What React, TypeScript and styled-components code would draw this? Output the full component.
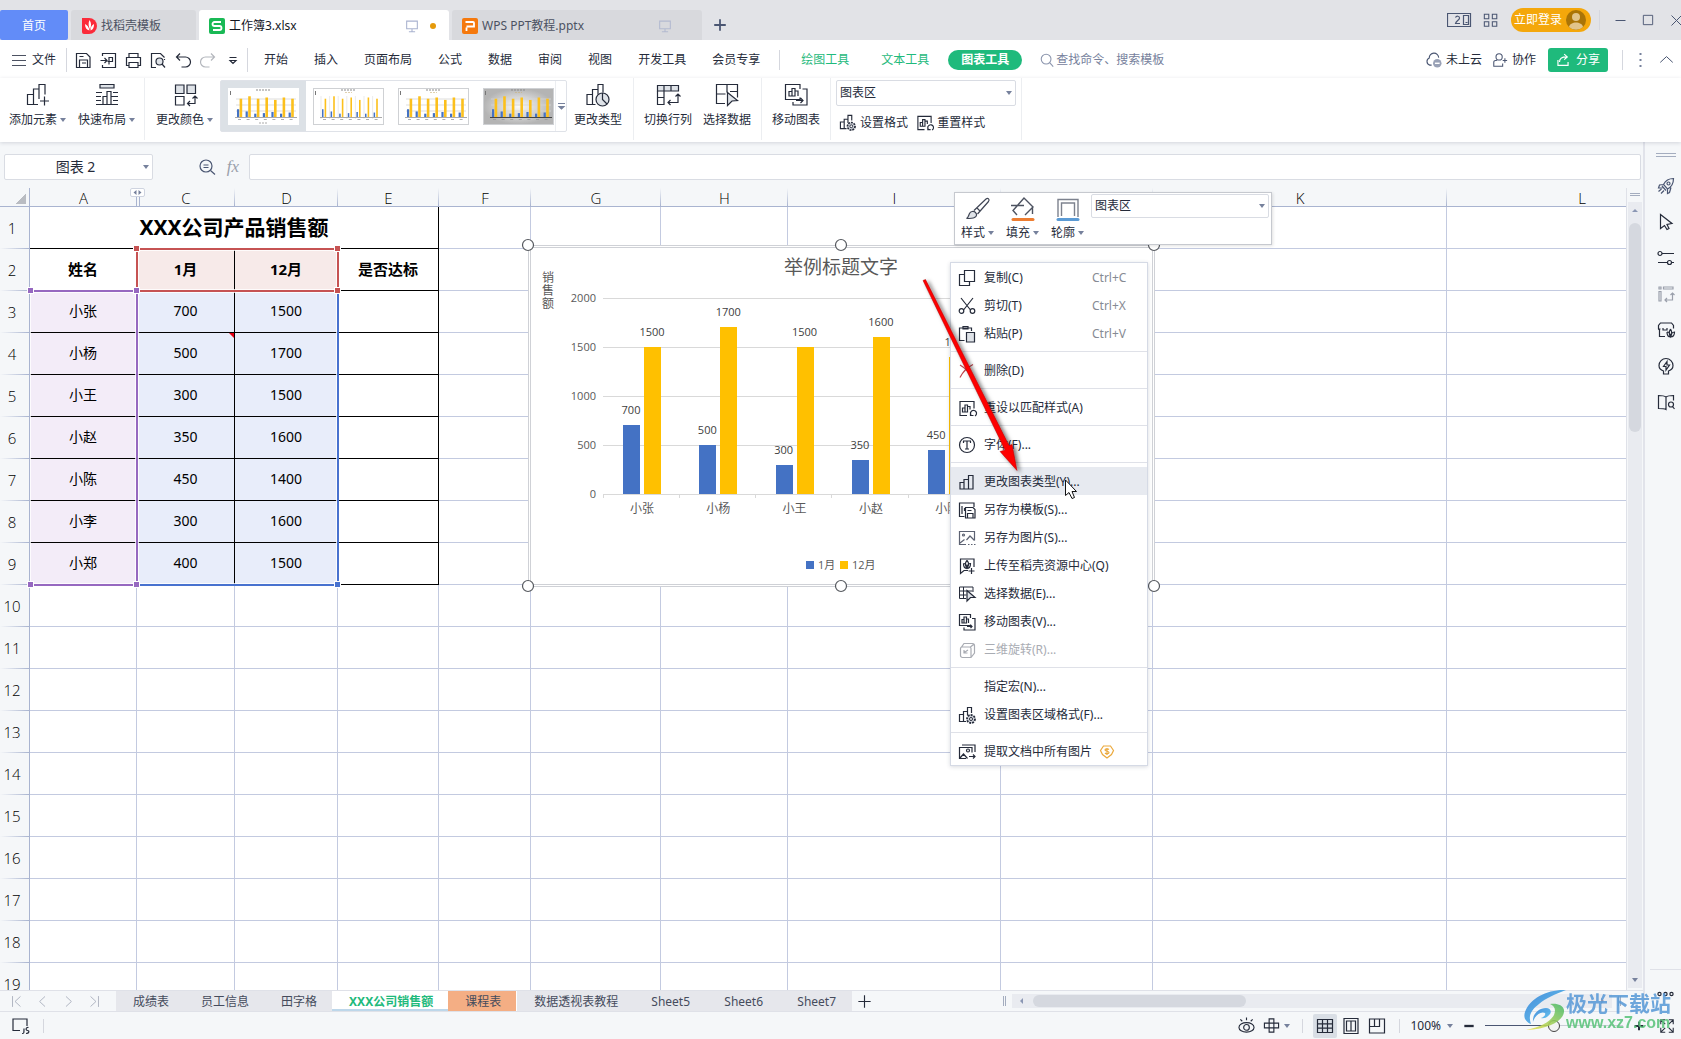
import React from "react";
import styled, { createGlobalStyle, css } from "styled-components";

const ink = "#252b3a";
const slate = "#4a5672";
const green = "#1fba7c";
const panel = "#f5f7f9";
const line = "#dfe1e8";
const gridLine = "#c3cae0";
const headLine = "#a9b4d0";

const GlobalStyle = createGlobalStyle`
  * { box-sizing: border-box; }
  body {
    margin: 0;
    font: 12px/16px "Noto Sans", "Noto Sans CJK SC", sans-serif;
    color: ${ink};
    overflow: hidden;
  }
  button, input, select { font: inherit; color: inherit; margin: 0; padding: 0; border: 0; background: none; outline: 0; }
  button { display: flex; align-items: center; justify-content: center; white-space: nowrap; }
  svg { display: block; flex: none; overflow: visible; }
`;

/* ---------- drawing helpers ---------- */

const Stroke = styled.svg<{ $c?: string; $w?: number }>`
  fill: none;
  stroke: ${(p) => p.$c || ink};
  stroke-width: ${(p) => p.$w || 1.2};
`;

type IconProps = { name: string; size?: number; color?: string; weight?: number };

const shapes: Record<string, React.ReactNode> = {
  menu: <path d="M2 4.500h14M2 9.500h14M2 14.500h14" />,
  save: <path d="M2.500 2.500h10l3.500 3.500v10.500h-13.500zM5.500 16.500v-7.500h8v7.500M8 12h4M5.500 5.500h4" />,
  exportPdf: <path d="M3.500 5v-2.500h13v14h-13v-2.500M1.500 9.500h6M5.500 7l2.500 2.500-2.500 2.500M10 13.500v-7h3.500v4h-5" />,
  print: <path d="M5 6.500v-4h9v4M4.500 14.500h-2v-8h14v8h-2M5 11.500h9v5h-9z" />,
  preview: (
    <>
      <path d="M7 16.500h-4.500v-14h9l4 4M15.500 8v1" />
      <circle cx="10.500" cy="10.500" r="3.500" fill="#dfe3e8" />
      <path d="M13 13l3 3.500" />
    </>
  ),
  undo: <path d="M6 2.500l-3.500 3.500 3.500 3.500M2.500 6h9a5 5 0 0 1 0 10h-4" />,
  redo: <path d="M12 2.500l3.500 3.500-3.500 3.500M15.500 6h-9a5 5 0 0 0 0 10h4" />,
  more: <path d="M5.500 6.500h7M6 9.500l3 3 3-3z" />,
  search: (
    <>
      <circle cx="8" cy="8" r="5.500" />
      <path d="M12 12l4 4.500" />
    </>
  ),
  fnZoom: (
    <>
      <circle cx="8" cy="8" r="6" />
      <path d="M12.500 12.500l4.500 4M5.500 7h5M5.500 9.500h5" />
    </>
  ),
  cloud: (
    <>
      <path d="M7 15H5a4 4 0 0 1-.5-7.500a5 5 0 0 1 10-.500" />
      <circle cx="13" cy="13" r="4.500" fill="#99a1b6" stroke="none" />
      <path d="M10.500 13h5" stroke="#fff" strokeWidth="1.500" />
    </>
  ),
  person: (
    <>
      <circle cx="8" cy="5.500" r="3.500" />
      <path d="M5.500 9.500h-1.500a2 2 0 0 0-2 2v4.500h10v-3M12 9.500h5M14.500 7v5" />
    </>
  ),
  share: <path d="M2.500 9v7h13v-4.500M4.500 11.500c0-4 3-6.500 9-6.500M10.500 1.500l4 3.500-4 3.500" />,
  up: <path d="M1.500 12.500l7.500-7 7.500 7" />,
  prev: <path d="M12.500 2l-7.500 7 7.500 7" />,
  next: <path d="M5.500 2l7.500 7-7.500 7" />,
  first: <path d="M3.500 1.500v15M14.500 2l-7.500 7 7.500 7" />,
  last: <path d="M14.500 1.500v15M3.500 2l7.500 7-7.500 7" />,
  plus: <path d="M9 2.500v13M2.500 9h13" />,
  minus: <path d="M3 9h12" />,
  screen: <path d="M3 3.500h12v8.500h-12zM9 12v3.500M5.500 15.500h7" />,
  apps: <path d="M1.500 2.500h5v5h-5zM10.500 2.500h5v5h-5zM1.500 11h5v5h-5zM10.500 11h5v5h-5z" />,
  square: <path d="M3 3h12v12h-12z" />,
  close: <path d="M3 3l12 12M15 3l-12 12" />,
  // ribbon, 24 grid
  addElement: <path d="M12 21.500h-10.500v-10h6v10M7.500 11.500v-5.500h5.500v10M13 6v-4.500h6v10M18.500 13.500v9M14 18h9" />,
  quickLayout: (
    <>
      <path d="M5 1.500h14v3.500h-14z" fill="#dfe3e8" />
      <path d="M1 9.500h6M1 13.500h5M1 17.500h5M1 21.500h22M8 21v-7.500h4v7.500M12 14v-5.500h4v12.500M18 9.500h5M16 13.500h7M18 17.500h5" />
    </>
  ),
  colors: (
    <>
      <path d="M2.500 2h8.500v8.500h-8.500zM14 2h8.500v8.500h-8.500z" fill="#dfe3e8" />
      <path d="M2.500 13.500h8.500v8.500h-8.500zM22 13v7.500h-7.500M19.500 15.500l2.500-2.500 2.500 2.500M17 18l-2.500 2.500 2.500 2.500" />
    </>
  ),
  chartType: (
    <>
      <path d="M9.500 21.500h-8.500v-10h5.500v10M6.500 11.500v-5h5.500v5M12 6.500v-5h5v8" />
      <circle cx="16.500" cy="16.500" r="6.500" fill="#dfe3e8" />
      <path d="M16.500 10v6.500l4.500 4.500" />
    </>
  ),
  swap: (
    <>
      <path d="M1.500 2.500h21v5.500h-21zM8 2.500v5.500M15 2.500v5.500" fill="#dfe3e8" />
      <path d="M1.500 8v13.500h6.500v-13.500M1.500 14.500h6.500M22 11v8.500h-10M19.500 13.500l2.500-2.500 2.500 2.500M14.500 17l-2.500 2.500 2.500 2.500" />
    </>
  ),
  selectData: (
    <>
      <path d="M10 20.500h-8.500v-19h21v13M1.500 11h9M12 1.500v8M15 8.500h7.500" />
      <path d="M12.500 9.500l10 8-5.500.500-4.500 4.500z" fill="#dfe3e8" />
    </>
  ),
  moveChart: (
    <path d="M16 6v-4.500h-14.500v15h14.500v-2M5 13v-4.500h3v4.500zM8 13v-7.500h3v7.500zM11 13v-5h3v5M18.500 6h4.500v16h-14v-3M12 17.500h7M16.500 15l2.500 2.500-2.500 2.500" />
  ),
  format: (
    <>
      <path d="M8 15.500h-6.500v-7h4v7M5.500 8.500v-3h4v4M9.500 5v-3.500h4v5.500" />
      <circle cx="13" cy="13" r="4" fill="#cfd3da" strokeDasharray="2 1" strokeWidth="1.800" />
      <circle cx="13" cy="13" r="1.500" fill="#fff" strokeWidth="1" />
    </>
  ),
  reset: (
    <path d="M9 16.500h-7v-14h14v7M4.500 13v-4h2.500v4zM7 13v-7h2.500v7zM9.500 12v-4.500h2.500v3M12.500 13v3.500h3M13 16a3 3 0 1 1 4 1" />
  ),
  // context menu
  copy: <path d="M6.500 1.500h10v11h-10zM6 5.500h-4.500v11h10v-4" />,
  cut: (
    <>
      <path d="M3 1l9.500 12M15 1l-9.500 12" />
      <circle cx="3.500" cy="14" r="2.300" />
      <circle cx="14.500" cy="14" r="2.300" />
    </>
  ),
  paste: (
    <>
      <path d="M6.500 15.500h-5v-12.500h12v3M5 3v-1.500h5v2.500h-5z" />
      <path d="M8.500 7.500h8v9.500h-8z" fill="#dfe3e8" />
    </>
  ),
  del: <path d="M2 3c5 3 9 7 13 12M15 2.500c-6 3-10 7-13 13" />,
  font: (
    <>
      <circle cx="9" cy="9" r="7.500" />
      <path d="M5.500 7v-2h7v2M9 5v8M7 13h4" />
    </>
  ),
  bars: <path d="M2 9.500h4v6.500h-4zM6 6.500h4.500v9.500h-4.500zM10.500 2.500h4.500v13.500h-4.500z" />,
  template: (
    <>
      <path d="M6.500 15.500h-5v-13.500h14.500v4M4 5v8M6.500 7v3" />
      <path d="M7.500 6.500h7.500l2 2v8.500h-9.500zM9.500 17v-4.500h5.500v4.500M9.500 9.500h4" />
    </>
  ),
  image: (
    <>
      <path d="M8 15.500h-6.500v-13h15v9M2 14l4.500-3.500M8.500 11l3.500-4 4.500 4.500M10 15.500h1.500M13 15.500h1.500M16 15.500h1.500" />
      <circle cx="5.500" cy="6" r="1" />
    </>
  ),
  upload: (
    <>
      <path d="M10 13.500h-4l-3.500 3v-14.500h13.500v8M13.500 11v6M10.500 14h6" />
      <path d="M9 3.500c2 2 2 5 0 8c-2-3-2-6 0-8M5.500 6.500c0 3 1 5 3.500 5c2.500 0 3.500-2 3.500-5c-2 0-3.500 2-3.500 5c0-3-1.500-5-3.500-5" />
    </>
  ),
  pick: (
    <>
      <path d="M8 13.500h-6.500v-11.500h13.500v5M1.500 6h13M1.500 10h7M5.500 2v11.500" strokeWidth="1" />
      <path d="M9 5.500l8 7h-4.500l-3.500 3.500z" fill="#dfe3e8" />
    </>
  ),
  move: <path d="M12.500 5v-3.500h-11v11h11v-1M4 10v-3.500h2v3.500zM6 10v-6h2.500v6zM8.500 10v-4h2v4M14 5.500h3v11.500h-11v-2.500M9 13.500h5M12.500 12l1.500 1.500-1.500 1.500" />,
  cube: <path d="M2.500 7.500a2 2 0 0 1 1-1.500l2.500-3.500h8.500a2 2 0 0 1 2 2v7.500l-3.500 4.500h-8.500a2 2 0 0 1-2-2zM3.500 6h8a1.500 1.500 0 0 1 1.500 1.500v8.500M12.500 6l3.500-3M5.500 12l4.500-3M6 9v3h3.500" />,
  extract: (
    <>
      <path d="M8 15.500h-6.500v-11h12.500v5M4 2h13v7M2 15l3.500-4 4 4.500M11 13.500h6M15 11.500l2 2-2 2" />
      <circle cx="10" cy="7.500" r="1.500" />
    </>
  ),
  // side panel
  rocket: (
    <>
      <path d="M16.500 1.500c-5 0-8 2-10 6l4 4.500c4-2 6-5.500 6-10.500zM6.500 7.500l-4 .500-1 3h4M10.500 12v4.500l2-1 1.500-5M4.500 12l-3 2.500M7 13.500l-3 3M5 9l4 4.500" />
      <circle cx="11.500" cy="6.500" r="1.500" />
    </>
  ),
  pointer: <path d="M3.500 1.500l11.500 9-5 1 2 4-2 1-2.500-4-4 3z" />,
  sliders: (
    <>
      <path d="M5 4.500h12M1 13.500h9M15 13.500h2" />
      <circle cx="3" cy="4.500" r="2" />
      <circle cx="12.500" cy="13.500" r="2" />
    </>
  ),
  transpose: <path d="M2 2h2v2h-2zM6.500 2h9.500v2h-9.500zM2 6.500h2v9.500h-2zM15.500 8v7h-7.500M13.500 10l2-2 2 2M10 13l-2 2 2 2" />,
  shop: (
    <>
      <path d="M8 15.500h-5.500v-6.500l-1-1v-3.500l2-2.500h11l2 2.500v3M6 7v2h4v-2M1.500 8h2" />
      <path d="M13.500 8c1.500 2.500 1.500 5.500 0 8c-1.500-2.500-1.500-5.500 0-8M10 11c0 3.500 1 5 3.500 5c2.500 0 4-1.500 4-5c-2 0-4 2-4 5c0-3-1.500-5-3.500-5" />
    </>
  ),
  idea: <path d="M6.500 14c-3-1-4.500-3-4.500-5.500a7 7 0 0 1 14 0c0 2.500-1.500 4.500-4.500 5.500v3h-5zM10 4.500l-3.500 5h2.500v3.500l3.500-5h-2.500z" />,
  book: (
    <>
      <path d="M9 4c-2-1.500-4-1.500-7.500-1.500v13c3.500 0 5.500 0 7.500 1v-12.500c2-1.500 4-1.500 7.500-1.500v5" />
      <circle cx="14" cy="11.500" r="2.500" />
      <path d="M15.500 13.500l2 2.500" />
    </>
  ),
  dots: (
    <>
      <circle cx="2.500" cy="9" r="1.600" />
      <circle cx="8.500" cy="9" r="1.600" />
      <circle cx="14.500" cy="9" r="1.600" />
    </>
  ),
  // status bar
  macro: <path d="M9 13.500h-7v-11.500h14v7M11 16.500c2 0 2 0 2-5M17.500 10.500c-3-.500-3 3-1 3s2 3-1.500 3" />,
  eye: (
    <>
      <ellipse cx="9" cy="11" rx="8" ry="5" />
      <circle cx="9" cy="11" r="3" />
      <path d="M9 .500v3M2.500 2.500l2 2M15.500 2.500l-2 2" />
    </>
  ),
  cross: <path d="M6.500 2h5v4.500h5v5h-5v4.500h-5v-4.500h-5v-5h5zM6.500 6.500h5v5h-5z" />,
  gridView: <path d="M1.500 2.500h15v13h-15zM1.500 6.800h15M1.500 11.100h15M6.500 2.500v13M11.500 2.500v13" />,
  pageView: <path d="M2 1.500h14v15h-14zM4.500 4h4.500v10h-4.500zM9 4h4.500v10h-4.500z" />,
  breakView: <path d="M1.500 2h15v14h-15zM6.500 2v7.500h5v-7.500M1.500 9.500h5" />,
  full: <path d="M11 2h5v5M16 2l-5 5M7 2h-5v5M2 2l5 5M2 11v5h5M2 16l5-5M16 11v5h-5M16 16l-5-5" />,
};

const big = new Set(["addElement", "quickLayout", "colors", "chartType", "swap", "selectData", "moveChart"]);

function Icon({ name, size = 18, color, weight }: IconProps) {
  const box = big.has(name) ? 24 : 18;
  return (
    <Stroke width={size} height={size} viewBox={`0 0 ${box} ${box}`} $c={color} $w={weight} aria-hidden>
      {shapes[name]}
    </Stroke>
  );
}

const Caret = styled.i<{ $dir?: "up" | "left" | "right" }>`
  flex: none;
  border: 3px solid transparent;
  width: 0;
  height: 0;
  ${(p) =>
    p.$dir === "up"
      ? css`border-top: 0; border-bottom-color: #8b97b4;`
      : p.$dir === "left"
        ? css`border-left: 0; border-right-color: #8b97b4;`
        : p.$dir === "right"
          ? css`border-right: 0; border-left-color: #8b97b4;`
          : css`border-bottom: 0; border-top: 4px solid #76819c;`}
`;

/* ---------- window frame ---------- */

const Window = styled.div`
  position: relative;
  display: flex;
  flex-direction: column;
  height: 100vh;
  background: ${panel};
`;

const TitleBar = styled.header`
  display: flex;
  align-items: flex-end;
  gap: 3px;
  height: 40px;
  background: #e2e3e7;
`;

const DocTab = styled.button<{ $kind?: "home" | "active"; $w: number }>`
  width: ${(p) => p.$w}px;
  height: 30px;
  gap: 4px;
  padding: 2px 10px 0;
  justify-content: flex-start;
  border-radius: 3px 3px 0 0;
  background: #d8d9dd;
  color: #4c5262;
  ${(p) => p.$kind === "home" && css`justify-content: center; background: #628cf8; color: #fff; border-radius: 2px;`}
  ${(p) => p.$kind === "active" && css`background: #fff; color: #14171f;`}
`;

const TabEnd = styled.span`
  display: flex;
  align-items: center;
  gap: 10px;
  margin-left: auto;
  padding-right: 3px;
`;

const Dot = styled.span<{ $off?: boolean }>`
  width: 6px;
  height: 6px;
  border-radius: 50%;
  background: ${(p) => (p.$off ? "transparent" : "#e59a0b")};
`;

const IconButton = styled.button<{ $w?: number; $h?: number; $on?: boolean }>`
  width: ${(p) => p.$w || 24}px;
  height: ${(p) => p.$h || 24}px;
  flex: none;
  border-radius: 2px;
  background: ${(p) => (p.$on ? "#d9dee5" : "transparent")};
`;

const WindowTools = styled.div`
  display: flex;
  align-items: center;
  height: 40px;
  margin-left: auto;
  gap: 8px;
  overflow: hidden;
`;

const Login = styled.button`
  height: 24px;
  width: 80px;
  gap: 4px;
  padding-right: 2px;
  border-radius: 12px;
  background: #f4a70b;
  color: #fff;
`;

const Rule = styled.span<{ $h?: number }>`
  width: 1px;
  height: ${(p) => p.$h || 20}px;
  flex: none;
  background: #d5d7de;
`;

const CaptionButtons = styled.div`
  display: flex;
  margin-right: -7px;
  gap: 4px;
`;

/* ---------- menu row and ribbon ---------- */

const MenuRow = styled.nav`
  display: flex;
  align-items: center;
  height: 38px;
  padding: 1px 0 0 10px;
  background: #fff;
`;

const FileButton = styled.button`
  gap: 4px;
  padding-right: 10px;
`;

const QuickBar = styled.div`
  display: flex;
  padding: 0 2px 0 4px;
  gap: 1px;
`;

const MenuList = styled.div<{ $gap: number; $pad: string }>`
  display: flex;
  align-items: center;
  gap: ${(p) => p.$gap}px;
  padding: ${(p) => p.$pad};
`;

const MenuItem = styled.button<{ $green?: boolean }>`
  height: 24px;
  color: ${(p) => (p.$green ? green : ink)};
`;

const PillItem = styled.button`
  height: 20px;
  padding: 0 13px;
  border-radius: 10px;
  background: ${green};
  color: #fff;
  font-weight: 700;
`;

const SearchBox = styled.label`
  display: flex;
  align-items: center;
  gap: 1px;
  margin-left: 17px;
  color: #76819c;
  input { width: 160px; }
  input::placeholder { color: #76819c; opacity: 1; }
`;

const Account = styled.div`
  display: flex;
  align-items: center;
  margin-left: auto;
  gap: 10px;
`;

const TextButton = styled.button`
  gap: 4px;
`;

const ShareButton = styled.button`
  width: 60px;
  height: 24px;
  gap: 6px;
  border-radius: 3px;
  background: ${green};
  color: #fff;
  margin: 0 4px 0 2px;
`;

const CollapseButton = styled.button`
  width: 24px;
  height: 24px;
  padding-right: 5px;
`;

const Ribbon = styled.section`
  display: flex;
  position: relative;
  z-index: 2;
  height: 64px;
  background: #fff;
  box-shadow: 0 1px 4px rgba(30, 40, 70, 0.16);
`;

const Group = styled.div<{ $gap?: number; $pad?: number }>`
  display: flex;
  align-items: flex-start;
  height: 62px;
  gap: ${(p) => p.$gap || 11}px;
  padding: 2px ${(p) => p.$pad || 10}px 0;
  border-right: 1px solid #eceef1;
`;

const RibbonButton = styled.button`
  flex-direction: column;
  gap: 5px;
  padding-top: 3px;
`;

const LabelRow = styled.span`
  display: flex;
  align-items: center;
  gap: 3px;
`;

const Gallery = styled.div`
  display: flex;
  height: 52px;
  border: 1px solid #dfe2e8;
  border-radius: 2px;
`;

const GalleryView = styled.div`
  display: flex;
  width: 334px;
  overflow: hidden;
`;

const GalleryItem = styled.button<{ $on?: boolean }>`
  flex: none;
  width: 85px;
  background: ${(p) => (p.$on ? "#dce1e6" : "#fff")};
`;

const GalleryMore = styled.button`
  width: 11px;
  border-left: 1px solid #eceef1;
`;

const Stack = styled.div`
  display: flex;
  flex-direction: column;
  gap: 8px;
`;

const Row = styled.div`
  display: flex;
  gap: 8px;
  padding-left: 3px;
`;

const SelectBox = styled.label<{ $w: number; $h: number; $size?: number; $center?: boolean }>`
  display: flex;
  align-items: center;
  flex: none;
  width: ${(p) => p.$w}px;
  height: ${(p) => p.$h}px;
  padding: 0 3px;
  border: 1px solid #d9dce3;
  border-radius: 2px;
  background: #fff;
  font-size: ${(p) => p.$size || 12}px;
  line-height: 20px;
  select {
    appearance: none;
    flex: 1;
    height: 100%;
    text-align-last: ${(p) => (p.$center ? "center" : "left")};
  }
`;

/* ---------- formula bar ---------- */

const Workspace = styled.div`
  display: flex;
  flex: 1;
  min-height: 0;
`;

const Book = styled.main`
  display: flex;
  flex-direction: column;
  flex: 1;
  min-width: 0;
`;

const FormulaBar = styled.div`
  display: flex;
  align-items: center;
  padding: 12px 2px 8px 4px;
  height: 46px;
`;

const FormulaTools = styled.div`
  display: flex;
  align-items: center;
  width: 96px;
  padding-left: 42px;
`;

const Fx = styled.button`
  width: 28px;
  font: italic 17px/20px "Liberation Serif", serif;
  color: #9a9fab;
`;

const FormulaInput = styled.input`
  flex: 1;
  height: 26px;
  border: 1px solid #d9dce3;
  border-radius: 2px;
  background: #fff;
  padding: 0 6px;
`;

/* ---------- sheet ---------- */

const SheetArea = styled.div`
  display: flex;
  flex: 1;
  min-height: 0;
`;

const Canvas = styled.div`
  position: relative;
  flex: 1;
  min-width: 0;
  overflow: hidden;
  background: #fff;
  border-right: 1px solid ${line};
`;

const Sheet = styled.table`
  table-layout: fixed;
  width: 1717px;
  min-width: 100%;
  border-collapse: separate;
  border-spacing: 0;
`;

const Corner = styled.td`
  height: 19px;
  padding: 0;
  background: linear-gradient(135deg, transparent 50%, #b9bcc2 50%) no-repeat 16px 6px / 10px 10px ${panel};
  border-right: 1px solid ${headLine};
  border-bottom: 1px solid ${headLine};
`;

const ColHead = styled.th`
  height: 19px;
  padding: 2px 0 0;
  font: 300 15px/16px "Open Sans", "Noto Sans", sans-serif;
  color: #000;
  border-bottom: 1px solid ${headLine};
  background: linear-gradient(to bottom, ${panel}, ${headLine}) no-repeat right / 1px 100% ${panel};
`;

const RowHead = styled.th`
  height: 42px;
  padding: 0 5px 0 0;
  font: 300 15px/18px "Open Sans", "Noto Sans", sans-serif;
  color: #000;
  border-right: 1px solid ${headLine};
  background: linear-gradient(to right, ${panel}, ${headLine}) no-repeat bottom / 100% 1px ${panel};
`;

type Tone = "purple" | "red" | "blue" | undefined;
const toneFill = { purple: "#f3ecf8", red: "#f7eae9", blue: "#e8edfa" };

const Cell = styled.td<{ $ink?: boolean; $tone?: Tone; $bold?: boolean; $title?: boolean; $note?: boolean }>`
  position: relative;
  height: 42px;
  padding: 0 0 2px;
  text-align: center;
  font-size: ${(p) => (p.$title ? 21 : p.$bold ? 15 : 14)}px;
  line-height: 24px;
  font-weight: ${(p) => (p.$bold || p.$title ? 700 : 400)};
  color: #000;
  background: ${(p) => (p.$tone ? toneFill[p.$tone] : "#fff")};
  border-right: 1px solid ${(p) => (p.$ink ? "#000" : gridLine)};
  border-bottom: 1px solid ${(p) => (p.$ink ? "#000" : gridLine)};
  ${(p) =>
    p.$note &&
    css`
      &::after {
        content: "";
        position: absolute;
        top: 0;
        right: 0;
        border-left: 5px solid transparent;
        border-top: 5px solid #e60012;
      }
    `}
`;

const HiddenMark = styled.button`
  position: absolute;
  left: 130px;
  top: 0;
  width: 15px;
  height: 9px;
  border: 1px solid #cfd4e0;
  border-radius: 2px;
  background: #fff;
`;

const HiddenGap = styled.span`
  position: absolute;
  left: 136px;
  top: 9px;
  width: 4px;
  height: 9px;
  border: solid ${headLine};
  border-width: 0 1px;
`;

const RangeFrame = styled.div<{ $x: number; $y: number; $w: number; $h: number; $c: string; $open?: boolean }>`
  position: absolute;
  left: ${(p) => p.$x}px;
  top: ${(p) => p.$y}px;
  width: ${(p) => p.$w}px;
  height: ${(p) => p.$h}px;
  border: 2px solid ${(p) => p.$c};
  ${(p) => p.$open && css`border-left: 0;`}
  box-shadow: inset 0 0 0 1px rgba(255, 255, 255, 0.8);
`;

const Grip = styled.i<{ $x: number; $y: number; $c: string }>`
  position: absolute;
  left: ${(p) => p.$x - 3}px;
  top: ${(p) => p.$y - 3}px;
  width: 7px;
  height: 7px;
  border: 1px solid #fff;
  background: ${(p) => p.$c};
`;

const ChartFrame = styled.figure`
  position: absolute;
  left: 528px;
  top: 57px;
  margin: 0;
  width: 627px;
  height: 342px;
  border: 3px double #cfd1d6;
  background: #fff;
  > svg { position: absolute; left: -3px; top: -3px; }
`;

const MiniBar = styled.div`
  position: absolute;
  left: 954px;
  top: 4px;
  display: flex;
  justify-content: space-between;
  width: 318px;
  height: 53px;
  padding: 1px 2px 0 6px;
  border: 1px solid #c6c9cf;
  background: #fff;
  box-shadow: 1px 1px 3px rgba(0, 0, 0, 0.12);
`;

const MiniTools = styled.div`
  display: flex;
  gap: 12px;
`;

const MiniButton = styled.button`
  flex-direction: column;
  gap: 4px;
`;

const ContextMenu = styled.div`
  position: absolute;
  left: 950px;
  top: 74px;
  width: 198px;
  border: 1px solid #d5dae5;
  background: #fff;
  box-shadow: 0 1px 4px rgba(40, 50, 80, 0.18);
`;

const Entry = styled.button<{ $on?: boolean }>`
  width: 100%;
  height: 28px;
  gap: 8px;
  padding: 1px 17px 0 7px;
  justify-content: flex-start;
  background: ${(p) => (p.$on ? "#e7eaf0" : "transparent")};
  &:disabled { color: #a9acb3; }
`;

const IconSlot = styled.span`
  width: 18px;
`;

const Keys = styled.kbd`
  margin-left: auto;
  width: 38px;
  text-align: left;
  font: inherit;
  color: #868a93;
`;

const Split = styled.hr`
  height: 1px;
  margin: 4px 0;
  border: 0;
  background: ${line};
`;

const Overlay = styled.svg`
  position: absolute;
  left: 0;
  top: 0;
  pointer-events: none;
`;

const VScroll = styled.div`
  display: flex;
  flex-direction: column;
  align-items: center;
  width: 16px;
  padding: 5px 0 2px;
`;

const Grabber = styled.span<{ $w: number; $h: number; $vertical?: boolean }>`
  flex: none;
  width: ${(p) => p.$w}px;
  height: ${(p) => p.$h}px;
  border: solid #a4adbf;
  border-width: ${(p) => (p.$vertical ? "0 1px" : "1px 0")};
`;

const VTrack = styled.div`
  display: flex;
  flex-direction: column;
  align-items: center;
  flex: 1;
  width: 14px;
  margin-top: 6px;
  padding: 7px 0 6px;
  background: #e9ebf0;
`;

const VThumb = styled.div`
  width: 12px;
  height: 209px;
  margin: 11px 0 auto;
  border-radius: 6px;
  background: #d5d8df;
`;

/* ---------- sheet tabs ---------- */

const TabStrip = styled.div`
  display: flex;
  align-items: center;
  height: 22px;
  border: solid ${line};
  border-width: 1px 0;
`;

const TabNav = styled.div`
  display: flex;
  gap: 2px;
  width: 116px;
  padding-left: 4px;
`;

const SheetTab = styled.button<{ $on?: boolean; $orange?: boolean }>`
  flex: none;
  min-width: 73px;
  height: 20px;
  padding: 2px 15px 0 17px;
  background: #e6e7ec;
  color: #454b5c;
  ${(p) => p.$on && css`background: #fff; color: ${green}; font-weight: 700; box-shadow: inset 0 -2px 0 #bdd7ea;`}
  ${(p) => p.$orange && css`min-width: 0; background: #f4ae84; border-right: 1px solid #fff;`}
`;

const ShortTab = styled(SheetTab)`
  min-width: 68px;
`;

const HScroll = styled.div`
  display: flex;
  align-items: center;
  width: 640px;
  margin-left: auto;
  gap: 6px;
`;

const HTrack = styled.div`
  display: flex;
  align-items: center;
  width: 600px;
  height: 14px;
  padding: 0 8px;
  background: #e9ebf0;
`;

const HThumb = styled.div`
  width: 213px;
  height: 12px;
  margin: 0 auto 0 10px;
  border-radius: 6px;
  background: #d5d8df;
`;

/* ---------- side panel and status bar ---------- */

const SidePanel = styled.aside`
  display: flex;
  flex-direction: column;
  align-items: center;
  width: 38px;
  padding: 11px 0 6px 5px;
  border-left: 2px solid #e1e3ea;
`;

const SideTools = styled.div`
  display: flex;
  flex-direction: column;
  gap: 12px;
  margin-top: 17px;
`;

const SideFoot = styled.div`
  display: flex;
  justify-content: center;
  width: 100%;
  margin-top: auto;
  padding-top: 12px;
  border-top: 1px solid ${line};
`;

const StatusBar = styled.footer`
  display: flex;
  align-items: center;
  height: 27px;
  padding: 0 2px 0 8px;
`;

const StatusGroup = styled.div<{ $gap: number; $pad: string }>`
  display: flex;
  align-items: center;
  gap: ${(p) => p.$gap}px;
  padding: ${(p) => p.$pad};
`;

const StatusRight = styled.div`
  display: flex;
  align-items: center;
  margin-left: auto;
`;

const ZoomSlider = styled.input`
  appearance: none;
  width: 138px;
  height: 12px;
  background: linear-gradient(to right, ${slate} 50%, #c9cdd6 50%) no-repeat center / 100% 1px;
  &::-webkit-slider-thumb {
    appearance: none;
    width: 12px;
    height: 12px;
    border: 1px solid #444;
    border-radius: 50%;
    background: #f3f3f3;
  }
`;

const Watermark = styled.div`
  position: absolute;
  right: 10px;
  bottom: 7px;
  display: flex;
  opacity: 0.88;
  z-index: 4;
  pointer-events: none;
`;

const WatermarkText = styled.div`
  display: flex;
  flex-direction: column;
  font: 700 21px/24px "Noto Sans CJK SC", sans-serif;
  color: #5b9bd8;
  span { font: 700 16px/18px "Liberation Sans", sans-serif; color: #5cc47c; }
`;

/* ---------- data ---------- */

const people = [
  { name: "小张", jan: 700, dec: 1500 },
  { name: "小杨", jan: 500, dec: 1700 },
  { name: "小王", jan: 300, dec: 1500 },
  { name: "小赵", jan: 350, dec: 1600 },
  { name: "小陈", jan: 450, dec: 1400 },
  { name: "小李", jan: 300, dec: 1600 },
  { name: "小郑", jan: 400, dec: 1500 },
];

const columns: [string, number][] = [
  ["A", 107], ["C", 98], ["D", 103], ["E", 101], ["F", 92], ["G", 130],
  ["H", 127], ["I", 213], ["J", 152], ["K", 294], ["L", 270],
];
const spare = ["F", "G", "H", "I", "J", "K", "L"];

const menuItems = ["开始", "插入", "页面布局", "公式", "数据", "审阅", "视图", "开发工具", "会员专享"];
const quick = ["save", "exportPdf", "print", "preview", "undo", "redo", "more"];

type MenuEntry = { icon?: string; text: string; keys?: string; color?: string; on?: boolean; off?: boolean; coin?: boolean };
const entries: (MenuEntry | null)[] = [
  { icon: "copy", text: "复制(C)", keys: "Ctrl+C" },
  { icon: "cut", text: "剪切(T)", keys: "Ctrl+X" },
  { icon: "paste", text: "粘贴(P)", keys: "Ctrl+V" },
  null,
  { icon: "del", text: "删除(D)", color: "#c0444c" },
  null,
  { icon: "reset", text: "重设以匹配样式(A)" },
  null,
  { icon: "font", text: "字体(F)..." },
  null,
  { icon: "bars", text: "更改图表类型(Y)...", on: true },
  { icon: "template", text: "另存为模板(S)..." },
  { icon: "image", text: "另存为图片(S)...", color: "#5c6272" },
  { icon: "upload", text: "上传至稻壳资源中心(Q)" },
  { icon: "pick", text: "选择数据(E)..." },
  { icon: "move", text: "移动图表(V)..." },
  { icon: "cube", text: "三维旋转(R)...", color: "#a9acb3", off: true },
  null,
  { text: "指定宏(N)..." },
  { icon: "format", text: "设置图表区域格式(F)..." },
  null,
  { icon: "extract", text: "提取文档中所有图片", coin: true },
];

/* ---------- pieces ---------- */

function Thumb({ look }: { look: number }) {
  const dark = look === 3;
  return (
    <svg width="71" height="37" viewBox="0 0 71 37" aria-hidden>
      <defs>
        <radialGradient id="thumbShade">
          <stop offset="0" stopColor="#fafafa" />
          <stop offset="1" stopColor="#b4b4b4" />
        </radialGradient>
      </defs>
      <rect x=".5" y=".5" width="70" height="36" fill={dark ? "url(#thumbShade)" : "#fff"} stroke={look ? "#cfd1d4" : "#fff"} />
      <path d="M28 2h14" stroke="#8b8b8b" strokeDasharray="2 1" />
      {look > 0 && <path d="M32 4.500h7" stroke="#c9b27a" strokeDasharray="2 1" strokeWidth=".6" />}
      <path d="M2.500 3v4" stroke="#777" />
      {look !== 1 && <path d="M8 11h60M8 17h60M8 23h60" stroke="#d4d4d4" strokeWidth=".8" />}
      {people.map((p, i) => {
        const x = 9 + i * 8.6;
        return (
          <g key={p.name}>
            {look === 1 && <path d={`M${x - 1} 8v23`} stroke="#ddd" strokeWidth=".6" />}
            <rect x={x} y={29 - p.jan / 90} width={look === 1 ? 1.5 : 2.2} height={p.jan / 90} fill="#4472c4" />
            <rect x={x + 2.6} y={29 - p.dec / 82} width={look === 1 ? 1.6 : 2.6} height={p.dec / 82} fill="#fcc01c" />
            <path d={`M${x + 1} 31.500h3`} stroke="#999" strokeWidth=".8" />
          </g>
        );
      })}
      <path d="M7 29.500h62" stroke={dark ? "#444" : "#aaa"} />
      {look === 0 && <path d="M31 35h8" stroke="#aaa" strokeDasharray="2 1" />}
    </svg>
  );
}

const ChartText = styled.text<{ $c?: string; $size?: number; $anchor?: string }>`
  font-family: "Open Sans", "Noto Sans CJK SC", sans-serif;
  font-size: ${(p) => p.$size || 11}px;
  fill: ${(p) => p.$c || "#595959"};
  text-anchor: ${(p) => p.$anchor || "middle"};
`;

function Chart() {
  const base = 249;
  const left = 75;
  const step = 76.3;
  const unit = 0.098;
  return (
    <ChartFrame>
      <svg width="627" height="342" viewBox="0 0 627 342" role="img" aria-label="举例标题文字">
        <ChartText x="313" y="29" $size={19}>举例标题文字</ChartText>
        {["销", "售", "额"].map((c, i) => (
          <ChartText key={c} x="20" y={37 + i * 13} $size={12}>{c}</ChartText>
        ))}
        {[0, 500, 1000, 1500, 2000].map((v) => (
          <g key={v}>
            <path d={`M${left} ${base - v * unit}H${left + step * 7}`} stroke="#d9d9d9" shapeRendering="crispEdges" />
            <ChartText x="68" y={base + 4 - v * unit} $anchor="end">{v}</ChartText>
          </g>
        ))}
        {people.map((p, i) => {
          const x = left + step * i;
          return (
            <g key={p.name}>
              <path d={`M${x} ${base}v4`} stroke="#d9d9d9" shapeRendering="crispEdges" />
              <g shapeRendering="crispEdges">
                <rect x={x + 20} y={base - p.jan * unit} width="17" height={p.jan * unit} fill="#4472c4" />
                <rect x={x + 41} y={base - p.dec * unit} width="17" height={p.dec * unit} fill="#ffc000" />
              </g>
              <ChartText x={x + 28} y={base - p.jan * unit - 11} $c="#404040">{p.jan}</ChartText>
              <ChartText x={x + 49} y={base - p.dec * unit - 11} $c="#404040">{p.dec}</ChartText>
              <ChartText x={x + 39} y="268" $size={12}>{p.name}</ChartText>
            </g>
          );
        })}
        <rect x="278" y="316" width="8" height="8" fill="#4472c4" />
        <ChartText x="290" y="324" $anchor="start">1月</ChartText>
        <rect x="312" y="316" width="8" height="8" fill="#ffc000" />
        <ChartText x="324" y="324" $anchor="start">12月</ChartText>
        {[0, 313, 626].map((x) =>
          [0, 341].map((y) => <circle key={`${x}-${y}`} cx={x} cy={y} r="5.500" fill="#fff" stroke="#55585e" strokeWidth="1.200" />)
        )}
      </svg>
    </ChartFrame>
  );
}

function DataSheet() {
  const blanks = (row: number) => spare.map((c) => <Cell key={c + row} />);
  return (
    <Sheet>
      <colgroup>
        <col style={{ width: 30 }} />
        {columns.map(([c, w]) => <col key={c} style={{ width: w }} />)}
      </colgroup>
      <thead>
        <tr>
          <Corner />
          {columns.map(([c]) => <ColHead key={c} scope="col">{c}</ColHead>)}
        </tr>
      </thead>
      <tbody>
        <tr>
          <RowHead scope="row">1</RowHead>
          <Cell $ink $title colSpan={4}>XXX公司产品销售额</Cell>
          {blanks(1)}
        </tr>
        <tr>
          <RowHead scope="row">2</RowHead>
          <Cell $ink $bold>姓名</Cell>
          <Cell $ink $bold $tone="red">1月</Cell>
          <Cell $ink $bold $tone="red">12月</Cell>
          <Cell $ink $bold>是否达标</Cell>
          {blanks(2)}
        </tr>
        {people.map((p, i) => (
          <tr key={p.name}>
            <RowHead scope="row">{i + 3}</RowHead>
            <Cell $ink $tone="purple">{p.name}</Cell>
            <Cell $ink $tone="blue" $note={i === 1}>{p.jan}</Cell>
            <Cell $ink $tone="blue">{p.dec}</Cell>
            <Cell $ink />
            {blanks(i + 3)}
          </tr>
        ))}
        {Array.from({ length: 10 }, (_, i) => i + 10).map((n) => (
          <tr key={n}>
            <RowHead scope="row">{n}</RowHead>
            {columns.map(([c]) => <Cell key={c} />)}
          </tr>
        ))}
      </tbody>
    </Sheet>
  );
}

const purple = "#9668c0";
const red = "#c65353";
const blue = "#4872cf";

function Highlights() {
  return (
    <>
      <RangeFrame $x={136} $y={102} $w={203} $h={296} $c={blue} />
      <RangeFrame $x={30} $y={102} $w={108} $h={296} $c={purple} $open />
      <RangeFrame $x={136} $y={60} $w={203} $h={44} $c={red} />
      <Grip $x={136} $y={60} $c={red} />
      <Grip $x={337} $y={60} $c={red} />
      <Grip $x={337} $y={102} $c={red} />
      <Grip $x={136} $y={102} $c={purple} />
      <Grip $x={30} $y={102} $c={purple} />
      <Grip $x={30} $y={396} $c={purple} />
      <Grip $x={136} $y={396} $c={purple} />
      <Grip $x={337} $y={396} $c={blue} />
    </>
  );
}

function MiniToolbar() {
  return (
    <MiniBar role="toolbar">
      <MiniTools>
        <MiniButton>
          <Stroke width="26" height="24" viewBox="0 0 26 24" $c="#3f4554">
            <path d="M1.500 21.500c2-1 2-3 3-5c1-2 4-3 6-1c2 2 1 4-1 5c-2 1-5 1-8 1z" fill="#dfe3e8" />
            <path d="M9 13.500l12-11.500c2-1.500 4 .500 2.500 2.500l-11 12.500M12 11l3.500 3.500" />
          </Stroke>
          <LabelRow>样式<Caret /></LabelRow>
        </MiniButton>
        <MiniButton>
          <Stroke width="26" height="24" viewBox="0 0 26 24" $c="#4d5361" $w={1.4}>
            <path d="M7 18l-4-4.500 11-12.500 9 9-8 8M1 8.500h13M22.500 9v8" />
            <path d="M3 22.500h20" stroke="#ed7d31" strokeWidth="3" strokeLinecap="round" />
          </Stroke>
          <LabelRow>填充<Caret /></LabelRow>
        </MiniButton>
        <MiniButton>
          <Stroke width="26" height="24" viewBox="0 0 26 24" $c="#7d828e" $w={1.4}>
            <path d="M3 20v-17.500h20v17.500M6.500 19v-13h13v13" />
            <path d="M3 22.500h20" stroke="#5b9bd5" strokeWidth="3" strokeLinecap="round" />
          </Stroke>
          <LabelRow>轮廓<Caret /></LabelRow>
        </MiniButton>
      </MiniTools>
      <SelectBox $w={178} $h={24} aria-label="图表元素">
        <select defaultValue="图表区"><option>图表区</option></select>
        <Caret />
      </SelectBox>
    </MiniBar>
  );
}

function PopupMenu() {
  return (
    <ContextMenu role="menu">
      {entries.map((e, i) =>
        e === null ? (
          <Split key={i} />
        ) : (
          <Entry key={e.text} role="menuitem" $on={e.on} disabled={e.off}>
            {e.icon ? <Icon name={e.icon} color={e.color} /> : <IconSlot />}
            {e.text}
            {e.keys && <Keys>{e.keys}</Keys>}
            {e.coin && (
              <Stroke width="14" height="14" viewBox="0 0 14 14" $c="#eba93c">
                <path d="M3.500 1h7l3 4.500-2 4-4.500 3.500-4.500-3.500-2-4zM9 4.500c-1-1-4-1-4 .500c0 1.500 4 1 4 2.500s-3 1.500-4 .500M7 3v7" />
              </Stroke>
            )}
          </Entry>
        )
      )}
    </ContextMenu>
  );
}

function Pointers() {
  return (
    <Overlay width="1200" height="400" viewBox="0 0 1200 400" aria-hidden>
      <defs>
        <filter id="soft" x="-20%" y="-20%" width="150%" height="150%">
          <feDropShadow dx="3" dy="2" stdDeviation="2" floodColor="#000" floodOpacity=".55" />
        </filter>
      </defs>
      <g filter="url(#soft)" fill="#fe0000" stroke="#a00" strokeWidth=".5">
        <path d="M923 92.500l2.500-1 83.500 166 3-1 5 26-17-19 5-1.500z" />
      </g>
      <path d="M1065.500 292v15.500l3.500-3 3 6 2.500-1-2.500-6h4.500z" fill="#fff" stroke="#111" />
    </Overlay>
  );
}

export default function App() {
  return (
    <Window>
      <GlobalStyle />
      <TitleBar>
        <DocTab $kind="home" $w={68}>首页</DocTab>
        <DocTab $w={125}>
          <svg width="16" height="16" viewBox="0 0 16 16" aria-hidden>
            <path d="M1 0h7a8 8 0 0 1 0 16h-5a2 2 0 0 1-2-2z" fill="#fb2b3a" />
            <path d="M8.500 2c2 3 2 6 .500 9.500c-1.500-3-2-6-.500-9.500M4 6c2 1 4 3 4.500 6.500c-3-.500-4.500-3-4.500-6.500M13 6c-2 1-3.500 3-3.500 6.500c3-1 3.500-3.500 3.500-6.500" fill="#fff" />
          </svg>
          找稻壳模板
        </DocTab>
        <DocTab $kind="active" $w={250}>
          <svg width="16" height="16" viewBox="0 0 16 16" aria-hidden>
            <rect width="16" height="16" rx="2" fill="#19b955" />
            <path d="M12 4h-6.500a1.800 1.800 0 0 0 0 4h5a1.800 1.800 0 0 1 0 4h-6.500" fill="none" stroke="#fff" strokeWidth="1.800" />
          </svg>
          工作簿3.xlsx
          <TabEnd><Icon name="screen" size={16} color="#a9b2cf" /><Dot /></TabEnd>
        </DocTab>
        <DocTab $w={250}>
          <svg width="16" height="16" viewBox="0 0 16 16" aria-hidden>
            <rect width="16" height="16" rx="2" fill="#f5790d" />
            <path d="M4.500 13v-3.500M3.500 4h7.500a1 1 0 0 1 1 1v3.500h-7.500" fill="none" stroke="#fff" strokeWidth="1.800" />
          </svg>
          WPS PPT教程.pptx
          <TabEnd><Icon name="screen" size={16} color="#b3bad0" /><Dot $off /></TabEnd>
        </DocTab>
        <IconButton $w={30} $h={30} aria-label="新建标签"><Icon name="plus" size={16} color={slate} weight={2} /></IconButton>
        <WindowTools>
          <Stroke width="24" height="16" viewBox="0 0 24 16" $c={slate}>
            <path d="M.5 1.500h23v13h-23zM16.500 3.500h5v9h-5zM8.500 5.500c1-2 4-1.500 4 .500c0 2-3.500 3-4 5.500h4.500M18.500 10.500h2" />
          </Stroke>
          <IconButton aria-label="应用"><Icon name="apps" size={16} color={slate} /></IconButton>
          <Login>
            立即登录
            <svg width="20" height="20" viewBox="0 0 20 20" aria-hidden>
              <circle cx="10" cy="10" r="10" fill="#aa7407" />
              <circle cx="10" cy="7" r="4" fill="#e2c48b" />
              <path d="M3 17c1-6 13-6 14 0a10 10 0 0 1-14 0" fill="#e2c48b" />
            </svg>
          </Login>
          <Rule />
          <CaptionButtons>
            <IconButton aria-label="最小化"><Icon name="minus" size={15} color={slate} /></IconButton>
            <IconButton aria-label="最大化"><Icon name="square" size={14} color={slate} /></IconButton>
            <IconButton aria-label="关闭"><Icon name="close" size={15} color={slate} /></IconButton>
          </CaptionButtons>
        </WindowTools>
      </TitleBar>

      <MenuRow>
        <FileButton><Icon name="menu" color="#4c5262" />文件</FileButton>
        <Rule $h={24} />
        <QuickBar>
          {quick.map((q) => (
            <IconButton key={q} aria-label={q}>
              <Icon name={q} color={q === "redo" ? "#b4b7bd" : undefined} />
            </IconButton>
          ))}
        </QuickBar>
        <Rule $h={24} />
        <MenuList $gap={26} $pad="0 19px 0 16px">
          {menuItems.map((m) => <MenuItem key={m}>{m}</MenuItem>)}
        </MenuList>
        <Rule />
        <MenuList $gap={32} $pad="0 19px 0 21px">
          <MenuItem $green>绘图工具</MenuItem>
          <MenuItem $green>文本工具</MenuItem>
        </MenuList>
        <PillItem>图表工具</PillItem>
        <SearchBox>
          <Icon name="search" size={16} color="#8b95ad" />
          <input type="text" aria-label="搜索" placeholder="查找命令、搜索模板" />
        </SearchBox>
        <Account>
          <TextButton><Icon name="cloud" size={17} color={slate} />未上云</TextButton>
          <TextButton><Icon name="person" size={16} color={slate} />协作</TextButton>
          <ShareButton><Icon name="share" size={14} color="#fff" weight={1.5} />分享</ShareButton>
          <Rule />
          <IconButton $w={14} aria-label="更多">
            <svg width="3" height="14" viewBox="0 0 3 14" fill="#76819c"><path d="M.5 0h2v2h-2zM.5 6h2v2h-2zM.5 12h2v2h-2z" /></svg>
          </IconButton>
          <CollapseButton aria-label="收起"><Icon name="up" size={15} color={slate} /></CollapseButton>
        </Account>
      </MenuRow>

      <Ribbon>
        <Group $gap={12} $pad={9}>
          <RibbonButton><Icon name="addElement" size={24} /><LabelRow>添加元素<Caret /></LabelRow></RibbonButton>
          <RibbonButton><Icon name="quickLayout" size={24} /><LabelRow>快速布局<Caret /></LabelRow></RibbonButton>
        </Group>
        <Group $gap={7} $pad={11}>
          <RibbonButton><Icon name="colors" size={24} /><LabelRow>更改颜色<Caret /></LabelRow></RibbonButton>
          <Gallery>
            <GalleryView>
              {[0, 1, 2, 3].map((n) => (
                <GalleryItem key={n} $on={n === 0} aria-label={`样式 ${n + 1}`}><Thumb look={n} /></GalleryItem>
              ))}
            </GalleryView>
            <GalleryMore aria-label="更多样式">
              <Stroke width="7" height="7" viewBox="0 0 7 7" $c="#76819c"><path d="M0 .5h7M1 3.500h5l-2.500 2.500z" fill="#76819c" /></Stroke>
            </GalleryMore>
          </Gallery>
          <RibbonButton><Icon name="chartType" size={24} />更改类型</RibbonButton>
        </Group>
        <Group>
          <RibbonButton><Icon name="swap" size={24} />切换行列</RibbonButton>
          <RibbonButton><Icon name="selectData" size={24} />选择数据</RibbonButton>
        </Group>
        <Group>
          <RibbonButton><Icon name="moveChart" size={24} />移动图表</RibbonButton>
        </Group>
        <Group $pad={5}>
          <Stack>
            <SelectBox $w={180} $h={26} aria-label="图表元素">
              <select defaultValue="图表区"><option>图表区</option></select>
              <Caret />
            </SelectBox>
            <Row>
              <TextButton><Icon name="format" size={17} />设置格式</TextButton>
              <TextButton><Icon name="reset" size={17} />重置样式</TextButton>
            </Row>
          </Stack>
        </Group>
      </Ribbon>

      <Workspace>
        <Book>
          <FormulaBar>
            <SelectBox $w={149} $h={26} $size={14} $center aria-label="名称框">
              <select defaultValue="图表 2"><option>图表 2</option></select>
              <Caret />
            </SelectBox>
            <FormulaTools>
              <IconButton aria-label="浏览公式结果"><Icon name="fnZoom" color={slate} /></IconButton>
              <Fx>fx</Fx>
            </FormulaTools>
            <FormulaInput type="text" aria-label="编辑栏" />
          </FormulaBar>
          <SheetArea>
            <Canvas>
              <DataSheet />
              <HiddenMark aria-label="取消隐藏">
                <svg width="9" height="5" viewBox="0 0 9 5" fill="#76819c"><path d="M3.500 0v5l-3-2.500zM5.500 0v5l3-2.500z" /></svg>
              </HiddenMark>
              <HiddenGap />
              <Highlights />
              <Chart />
              <MiniToolbar />
              <PopupMenu />
              <Pointers />
            </Canvas>
            <VScroll>
              <Grabber $w={10} $h={3} />
              <VTrack>
                <Caret $dir="up" />
                <VThumb />
                <Caret />
              </VTrack>
            </VScroll>
          </SheetArea>
          <TabStrip>
            <TabNav>
              {["first", "prev", "next", "last"].map((n) => (
                <IconButton key={n} $h={20} aria-label={n}><Icon name={n} size={13} color="#a6acb9" /></IconButton>
              ))}
            </TabNav>
            <ShortTab>成绩表</ShortTab>
            <SheetTab>员工信息</SheetTab>
            <ShortTab>田字格</ShortTab>
            <SheetTab $on>XXX公司销售额</SheetTab>
            <SheetTab $orange>课程表</SheetTab>
            <SheetTab>数据透视表教程</SheetTab>
            <SheetTab>Sheet5</SheetTab>
            <SheetTab>Sheet6</SheetTab>
            <SheetTab>Sheet7</SheetTab>
            <IconButton $h={20} aria-label="新建工作表"><Icon name="plus" size={17} /></IconButton>
            <HScroll>
              <Grabber $w={3} $h={10} $vertical />
              <HTrack>
                <Caret $dir="left" />
                <HThumb />
                <Caret $dir="right" />
              </HTrack>
              <Grabber $w={3} $h={10} $vertical />
            </HScroll>
          </TabStrip>
        </Book>
        <SidePanel>
          <Grabber $w={20} $h={4} />
          <SideTools>
            {["rocket", "pointer", "sliders", "transpose", "shop", "idea", "book"].map((n) => (
              <IconButton key={n} aria-label={n}>
                <Icon name={n} color={n === "transpose" ? "#9a9fab" : n === "rocket" ? slate : undefined} />
              </IconButton>
            ))}
          </SideTools>
          <SideFoot><IconButton aria-label="更多工具"><Icon name="dots" /></IconButton></SideFoot>
        </SidePanel>
      </Workspace>

      <StatusBar>
        <StatusGroup $gap={11} $pad="0">
          <IconButton aria-label="宏"><Icon name="macro" /></IconButton>
          <Rule $h={14} />
        </StatusGroup>
        <StatusRight>
          <StatusGroup $gap={1} $pad="0 12px 0 0">
            <IconButton aria-label="护眼"><Icon name="eye" size={17} /></IconButton>
            <IconButton aria-label="阅读模式"><Icon name="cross" size={17} /></IconButton>
            <Caret />
          </StatusGroup>
          <Rule $h={14} />
          <StatusGroup $gap={2} $pad="0 10px">
            <IconButton $on aria-label="普通视图"><Icon name="gridView" /></IconButton>
            <IconButton aria-label="页面布局"><Icon name="pageView" /></IconButton>
            <IconButton aria-label="分页预览"><Icon name="breakView" /></IconButton>
          </StatusGroup>
          <Rule $h={14} />
          <StatusGroup $gap={10} $pad="0 0 0 10px">
            <LabelButton>100%<Caret /></LabelButton>
            <IconButton $w={12} aria-label="缩小"><Icon name="minus" size={14} weight={3} /></IconButton>
            <ZoomSlider type="range" aria-label="缩放" min="0" max="100" defaultValue="50" />
            <IconButton $w={12} aria-label="放大"><Icon name="plus" size={12} weight={3} /></IconButton>
            <IconButton aria-label="全屏"><Icon name="full" size={16} /></IconButton>
          </StatusGroup>
        </StatusRight>
      </StatusBar>

      <Watermark>
        <svg width="42" height="42" viewBox="0 0 42 42" aria-hidden>
          <defs>
            <linearGradient id="aurora" x1="0" y1="0" x2="1" y2="1">
              <stop offset="0" stopColor="#2f7fd6" />
              <stop offset="1" stopColor="#58c4f0" />
            </linearGradient>
            <linearGradient id="leaf" x1="0" y1="1" x2="1" y2="0">
              <stop offset="0" stopColor="#f2e24a" />
              <stop offset="1" stopColor="#45b96c" />
            </linearGradient>
          </defs>
          <path d="M42 0c-18-1-36 8-41 22c-2 6 1 10 6 12c-3-8 0-14 8-20c7-6 17-10 27-14z" fill="url(#aurora)" />
          <path d="M26 14c7-1 13 1 14 6c1 9-12 19-38 20c15-3 24-8 28-15c2-5 1-9-4-11z" fill="url(#leaf)" />
          <path d="M9 32c-1-8 6-14 13-14c4 0 6 3 4 6c-2 3-6 5-9 4c3-1 5-3 4-5c-4-2-10 2-12 9z" fill="url(#aurora)" />
        </svg>
        <WatermarkText>极光下载站<span>www.xz7.com</span></WatermarkText>
      </Watermark>
    </Window>
  );
}

const LabelButton = styled.button`
  gap: 6px;
`;
